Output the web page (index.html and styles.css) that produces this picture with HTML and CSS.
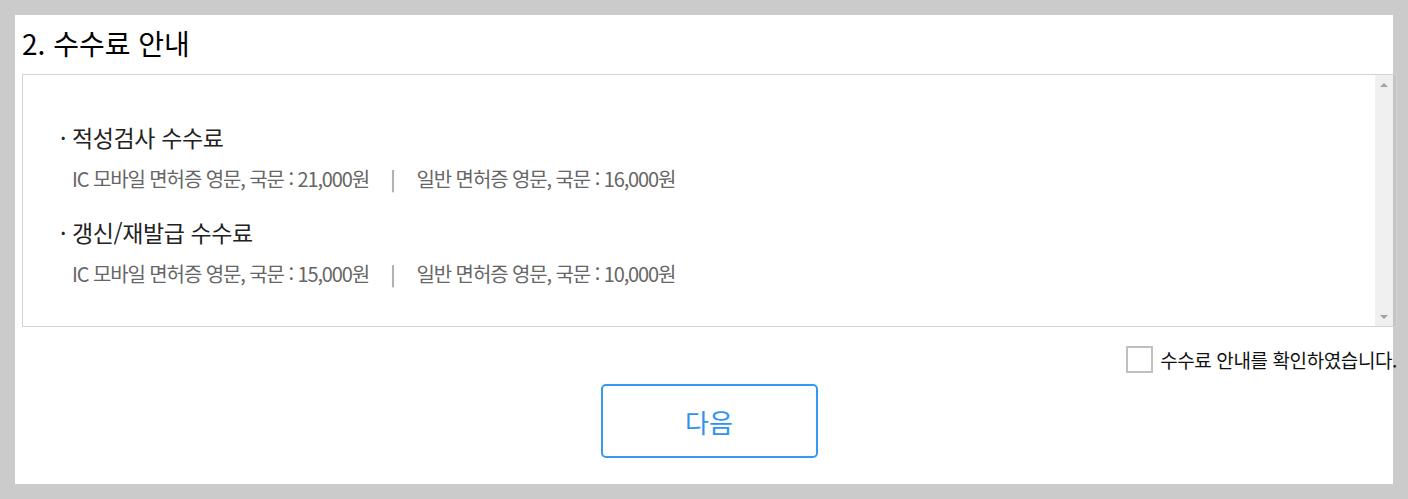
FILE: index.html
```html
<!DOCTYPE html>
<html lang="ko">
<head>
<meta charset="utf-8">
<link rel="stylesheet" href="styles.css">
</head>
<body>
<div class="panel">
  <h2 class="title">2. 수수료 안내</h2>
  <div class="box">
    <div class="box-content">
      <div class="fee-group">
        <p class="fee-head">· 적성검사 수수료</p>
        <p class="fee-line">IC 모바일 면허증 영문, 국문 : 21,000원<span class="sep">|</span>일반 면허증 영문, 국문 : 16,000원</p>
      </div>
      <div class="fee-group">
        <p class="fee-head">· 갱신/재발급 수수료</p>
        <p class="fee-line">IC 모바일 면허증 영문, 국문 : 15,000원<span class="sep">|</span>일반 면허증 영문, 국문 : 10,000원</p>
      </div>
    </div>
    <div class="scrollbar">
      <span class="arrow up"></span>
      <span class="arrow down"></span>
    </div>
    <div class="gap"></div>
  </div>
  <label class="confirm">
    <span class="check"></span>
    <span class="confirm-text">수수료 안내를 확인하였습니다.</span>
  </label>
  <div class="actions">
    <button class="next">다음</button>
  </div>
</div>
</body>
</html>
```

FILE: styles.css
```css
html, body {
  margin: 0;
  padding: 0;
}
body {
  background: #cbcbcb;
  width: 1408px;
  height: 499px;
  overflow: hidden;
  font-family: "Noto Sans CJK KR", "Noto Sans", sans-serif;
}
.panel {
  margin: 15px 0 0 15px;
  width: 1378px;
  height: 469px;
  background: #fff;
  box-sizing: border-box;
  padding: 0 0 0 7px;
}
.title {
  margin: 0;
  padding-top: 10px;
  height: 59px;
  box-sizing: border-box;
  font-size: 28px;
  font-weight: 400;
  line-height: 36px;
  color: #000;
}
.box {
  display: flex;
  width: 1375px;
  height: 253px;
  box-sizing: border-box;
  border: 1px solid #d3d3d3;
}
.box-content {
  flex: 1;
  background: #fff;
  padding: 47px 0 0 37px;
}
.fee-group + .fee-group {
  margin-top: 25px;
}
.fee-head {
  margin: 0;
  font-size: 23px;
  line-height: 30px;
  color: #222;
  letter-spacing: -0.4px;
}
.fee-line {
  margin: 14px 0 0 12px;
  font-size: 20px;
  line-height: 26px;
  color: #666;
  letter-spacing: -1.1px;
}
.sep {
  display: inline-block;
  margin: 0 22px 0 21px;
  color: #8c8c8c;
}
.scrollbar {
  width: 18px;
  background: #f0f0f0;
  display: flex;
  flex-direction: column;
  justify-content: space-between;
  align-items: center;
  padding: 8px 0 7px;
  box-sizing: border-box;
}
.arrow {
  width: 0;
  height: 0;
  border-left: 4px solid transparent;
  border-right: 4px solid transparent;
}
.arrow.up {
  border-bottom: 4px solid #a3a3a3;
}
.arrow.down {
  border-top: 4px solid #a3a3a3;
}
.gap {
  width: 3px;
  background: #c4c4c4;
}
.confirm {
  display: flex;
  justify-content: flex-end;
  align-items: center;
  gap: 7px;
  height: 27px;
  margin-top: 19px;
  margin-right: -4px;
}
.check {
  width: 27px;
  height: 27px;
  box-sizing: border-box;
  border: 2px solid #c0c0c0;
  background: #fff;
}
.confirm-text {
  font-size: 19px;
  line-height: 27px;
  color: #111;
  letter-spacing: -0.4px;
}
.actions {
  display: flex;
  justify-content: center;
  margin-top: 11px;
  padding-left: 3px;
}
.next {
  width: 217px;
  height: 74px;
  box-sizing: border-box;
  border: 2px solid #3399f3;
  border-radius: 5px;
  background: #fff;
  color: #2f93ee;
  font-family: "Noto Sans CJK KR", "Noto Sans", sans-serif;
  font-size: 26px;
  padding: 0;
}
```
